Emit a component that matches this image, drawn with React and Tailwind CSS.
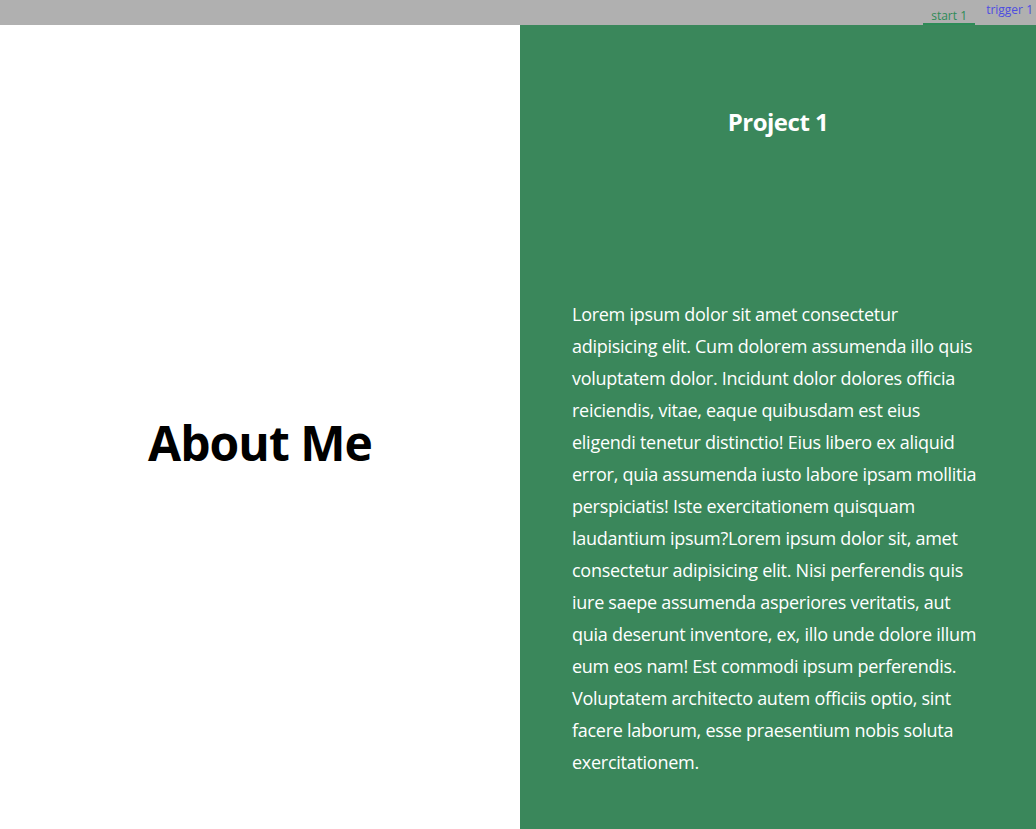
import React from "react";

const lorem =
  "Lorem ipsum dolor sit amet consectetur adipisicing elit. Cum dolorem assumenda illo quis voluptatem dolor. Incidunt dolor dolores officia reiciendis, vitae, eaque quibusdam est eius eligendi tenetur distinctio! Eius libero ex aliquid error, quia assumenda iusto labore ipsam mollitia perspiciatis! Iste exercitationem quisquam laudantium ipsum?Lorem ipsum dolor sit, amet consectetur adipisicing elit. Nisi perferendis quis iure saepe assumenda asperiores veritatis, aut quia deserunt inventore, ex, illo unde dolore illum eum eos nam! Est commodi ipsum perferendis. Voluptatem architecto autem officiis optio, sint facere laborum, esse praesentium nobis soluta exercitationem.";

export default function App() {
  return (
    <div className="relative min-h-screen bg-white font-['Open_Sans',sans-serif]">
      {/* top spacer bar */}
      <div className="h-[25px] bg-[#b0b0b0]" />

      {/* scroll markers */}
      <div className="absolute right-[61px] top-[9px] border-b-2 border-[#2e8b57] px-2 text-[12px] leading-[14px] text-[#2e8b57]">
        start 1
      </div>
      <div className="absolute right-[3px] top-[1px] text-[12px] leading-[17px] text-[#4d4de0]">
        trigger 1
      </div>

      <div className="grid h-[829px] grid-cols-[520px_1fr]">
        {/* left */}
        <div className="flex items-center justify-center pt-[6px]">
          <h1 className="text-[48px] font-bold tracking-[-0.02em] text-black">About Me</h1>
        </div>

        {/* right */}
        <div className="flex flex-col bg-[#3a875b] px-[52px] text-white">
          <h2 className="mt-[81px] text-center text-[24px] font-bold leading-[32px] tracking-[-0.02em]">
            Project 1
          </h2>
          <p className="mt-[160px] text-[18px] leading-[32px] tracking-[-0.015em]">{lorem}</p>
        </div>
      </div>
    </div>
  );
}
